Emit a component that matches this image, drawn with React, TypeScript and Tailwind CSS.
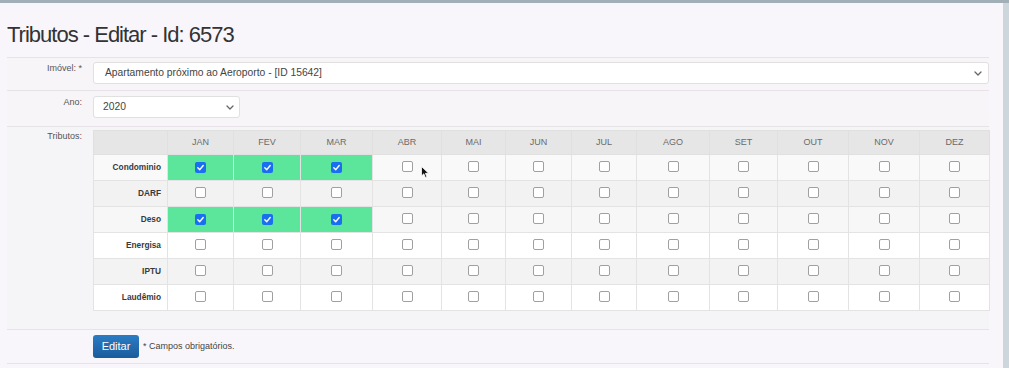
import React from 'react'

const MONTHS = ['JAN', 'FEV', 'MAR', 'ABR', 'MAI', 'JUN', 'JUL', 'AGO', 'SET', 'OUT', 'NOV', 'DEZ']
const COL_WIDTHS = [66, 67, 72, 69, 64, 66, 65, 73, 68, 71, 71, 70]

interface Tributo {
  name: string
  paid: number[]
  bg: string
}

const TRIBUTOS: Tributo[] = [
  { name: 'Condominio', paid: [0, 1, 2], bg: 'bg-[#f9f9f9]' },
  { name: 'DARF', paid: [], bg: 'bg-[#f2f2f2]' },
  { name: 'Deso', paid: [0, 1, 2], bg: 'bg-[#f7f7f7]' },
  { name: 'Energisa', paid: [], bg: 'bg-white' },
  { name: 'IPTU', paid: [], bg: 'bg-[#f3f3f3]' },
  { name: 'Laudêmio', paid: [], bg: 'bg-white' },
]

function Check({ checked }: { checked: boolean }) {
  if (checked) {
    return (
      <span className="inline-flex h-[11px] w-[11px] items-center justify-center rounded-[2px] bg-[#1a6ff0]">
        <svg width="9" height="9" viewBox="0 0 10 10">
          <path d="M2 5.3 L4.2 7.4 L8 2.8" fill="none" stroke="white" strokeWidth="1.6" strokeLinecap="round" strokeLinejoin="round" />
        </svg>
      </span>
    )
  }
  return <span className="inline-block h-[11px] w-[11px] rounded-[2px] border border-[#a0a0a0] bg-white" />
}

function Chevron() {
  return (
    <svg width="8" height="5" viewBox="0 0 8 5">
      <path d="M1 1 L4 4 L7 1" fill="none" stroke="#666" strokeWidth="1.3" strokeLinecap="round" strokeLinejoin="round" />
    </svg>
  )
}

function Label({ children }: { children: React.ReactNode }) {
  return <div className="w-[75px] shrink-0 text-right text-[9px] text-[#555]">{children}</div>
}

export default function App() {
  return (
    <div className="relative h-[368px] w-[1009px] overflow-hidden bg-[#ccd6dc] font-['Liberation_Sans',Arial,sans-serif]">
      <div className="h-[3px] bg-[#a2afb7]" />
      <div className="mr-[6px] h-[365px] bg-[#f9f6fb] pl-[7px] pr-[14px]">
        <div className="h-[54px] pt-[21px] text-[22px] leading-none tracking-[-1px] text-[#333]">
          Tributos - Editar - Id: 6573
        </div>

        <div className="flex h-[33px] gap-[11px] border-t border-[#e6e2e8] bg-[#f7f5f8] pt-[4px]">
          <Label>Imóvel: *</Label>
          <div className="flex h-[22px] w-[896px] items-center justify-between rounded-[3px] border border-[#e0e0e0] bg-white pl-[11px] pr-[6px] text-[10.3px] text-[#444]">
            <span>Apartamento próximo ao Aeroporto - [ID 15642]</span>
            <Chevron />
          </div>
        </div>

        <div className="flex h-[36px] gap-[11px] border-t border-[#e6e2e8] bg-[#f7f5f8] pt-[5px]">
          <Label>Ano:</Label>
          <div className="flex h-[22px] w-[147px] items-center justify-between rounded-[3px] border border-[#e0e0e0] bg-white pl-[9px] pr-[5px] text-[10.3px] text-[#444]">
            <span>2020</span>
            <Chevron />
          </div>
        </div>

        <div className="flex h-[203px] gap-[11px] border-t border-[#e6e2e8] bg-[#f5f4f6] pt-[3px]">
          <Label>Tributos:</Label>
          <table className="h-fit w-[896px] table-fixed border-collapse text-[9px]">
            <colgroup>
              <col className="w-[74px]" />
              {COL_WIDTHS.map((w, i) => (
                <col key={i} style={{ width: w }} />
              ))}
            </colgroup>
            <thead>
              <tr className="h-[24px] bg-[#e6e6e6]">
                <th className="border border-[#e0e0e0]" />
                {MONTHS.map((m) => (
                  <th key={m} className="border border-[#e0e0e0] text-center font-normal text-[#6a6a6a]">{m}</th>
                ))}
              </tr>
            </thead>
            <tbody>
              {TRIBUTOS.map((t) => (
                <tr key={t.name} className={`h-[26px] ${t.bg}`}>
                  <td className="border border-[#e3e3e3] pr-[6px] text-right text-[8.3px] font-bold text-[#3a3a3a]">{t.name}</td>
                  {MONTHS.map((m, i) => {
                    const on = t.paid.includes(i)
                    return (
                      <td key={m} className={`border border-[#e3e3e3] text-center leading-none ${on ? 'bg-[#5be69c]' : ''}`}>
                        <Check checked={on} />
                      </td>
                    )
                  })}
                </tr>
              ))}
            </tbody>
          </table>
        </div>

        <div className="flex h-[35px] items-center gap-[4px] border-y border-[#e6e2e8] pl-[86px]">
          <button className="h-[23px] w-[46px] rounded-[3px] bg-gradient-to-b from-[#2b7cc4] to-[#1a5c9c] text-[11px] text-white">
            Editar
          </button>
          <span className="text-[9px] text-[#444]">* Campos obrigatórios.</span>
        </div>
      </div>

      <svg className="absolute left-[421px] top-[166px]" width="9" height="13" viewBox="0 0 9 13">
        <path d="M0.5 0.5 L0.5 10 L2.8 7.8 L4.4 11.6 L5.9 11 L4.4 7.3 L7.6 7.3 Z" fill="#111" stroke="white" strokeWidth="0.8" />
      </svg>
    </div>
  )
}
